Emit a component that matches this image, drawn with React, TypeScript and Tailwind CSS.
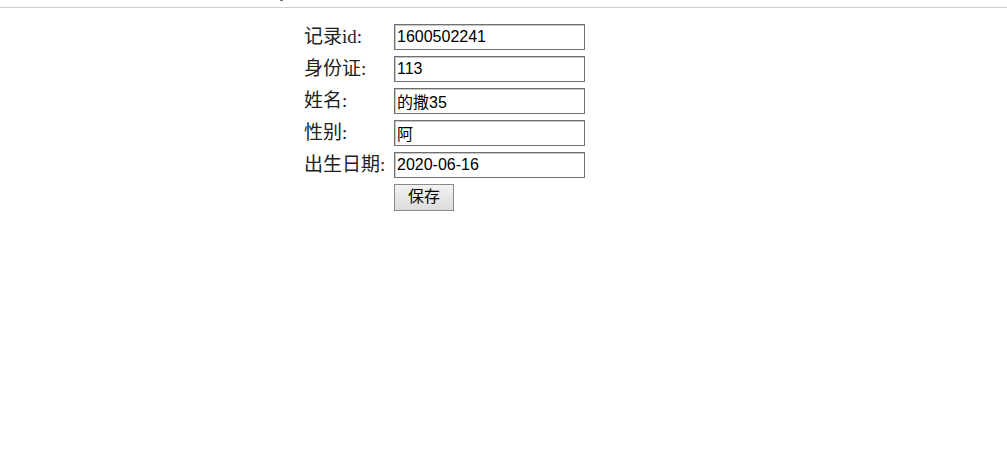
const rows = [
  { label: "记录id:", value: "1600502241" },
  { label: "身份证:", value: "113" },
  { label: "姓名:", value: "的撒35" },
  { label: "性别:", value: "阿" },
  { label: "出生日期:", value: "2020-06-16" },
];

export default function App() {
  return (
    <div className="w-[1007px] h-[456px] bg-white overflow-hidden">
      <div className="h-[7px] overflow-hidden relative">
        <span className="absolute left-[280px] top-[-14px] text-[14px] leading-[16px] text-[#333] font-['Liberation_Serif',serif]">
          y
        </span>
      </div>
      <div className="h-px bg-[#cfcfcf]" />
      <div className="pl-[304px] pt-[13px]">
        {rows.map((row) => (
          <div key={row.label} className="flex items-center h-[32px]">
            <label className="w-[90px] text-[19px] text-[#222] font-['Liberation_Serif','Noto_Sans_CJK_SC',serif]">
              {row.label}
            </label>
            <input
              readOnly
              value={row.value}
              className="w-[191px] h-[26px] px-[2px] border border-[#707070] shadow-[inset_1px_1px_0_#c8c8c8] text-[16px] text-black font-['Liberation_Sans','Noto_Sans_CJK_SC',sans-serif] outline-none"
            />
          </div>
        ))}
        <div className="flex h-[32px] items-center pl-[90px]">
          <button
            type="button"
            className="w-[60px] h-[27px] border border-[#8a8a8a] bg-gradient-to-b from-[#f2f2f2] to-[#dcdcdc] text-[16px] text-black font-['Liberation_Sans','Noto_Sans_CJK_SC',sans-serif]"
          >
            保存
          </button>
        </div>
      </div>
    </div>
  );
}
